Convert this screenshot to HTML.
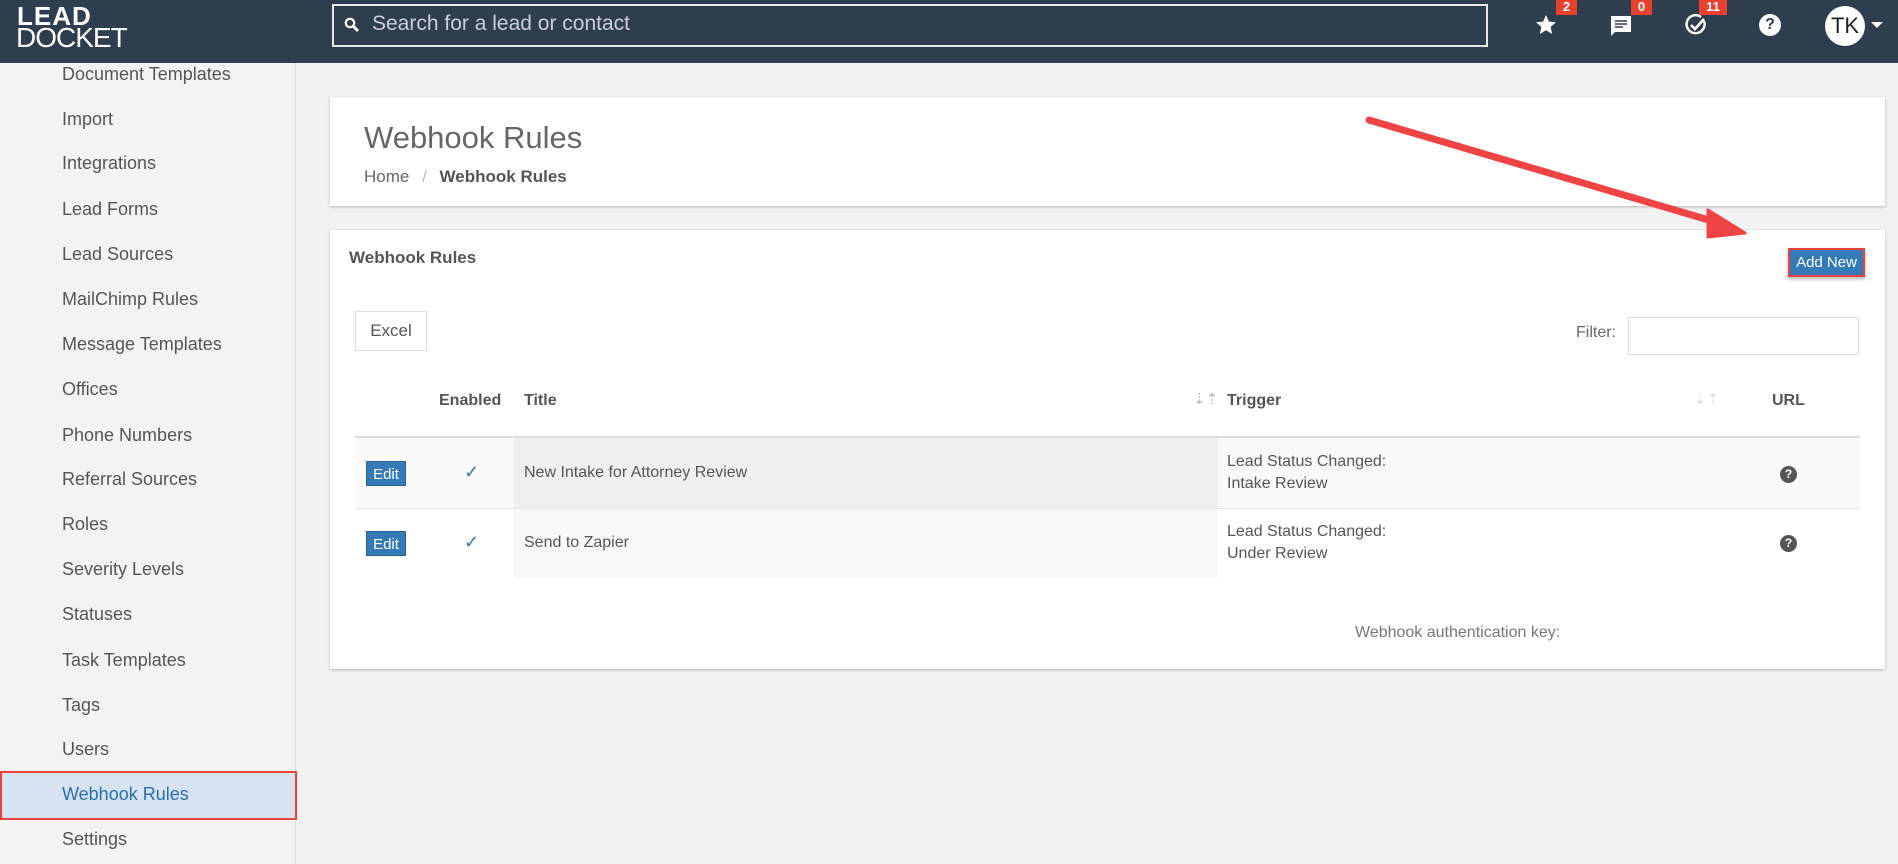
<!DOCTYPE html>
<html><head><meta charset="utf-8"><style>
*{box-sizing:border-box;margin:0;padding:0}
body{width:1898px;height:864px;overflow:hidden;background:#f2f2f2;font-family:"Liberation Sans",sans-serif;color:#555;position:relative}
.nav{position:absolute;left:0;top:0;width:1898px;height:63px;background:#2f3e4f}
.abs{position:absolute}
.side{position:absolute;left:0;top:63px;width:296px;height:801px;background:#f3f3f3;border-right:1px solid #ddd}
.side div{position:absolute;left:62px;font-size:18px;color:#555;line-height:20px}
.card{position:absolute;background:#fff;box-shadow:0 1px 3px rgba(0,0,0,.25)}
.badge{position:absolute;top:0;height:15px;background:#e8412f;color:#fff;font-size:13px;font-weight:bold;line-height:14px;text-align:center}
.edit{position:absolute;left:366px;width:40px;height:25px;background:#337ab7;color:#fff;font-size:15px;line-height:25px;text-align:center;border:1px solid #2a6496}
.chk{position:absolute;left:464px;color:#337ab7;font-size:18px}
.t{position:absolute;font-size:16px;color:#555}
.q{position:absolute;left:1780px;width:17px;height:17px;border-radius:50%;background:#555;color:#fff;font-size:12px;font-weight:bold;text-align:center;line-height:17px}
</style></head><body>
<div class="nav">
  <div class="abs" style="left:17px;top:3px;color:#fff;font-weight:bold;font-size:26px;letter-spacing:1px;line-height:26px">LEAD</div>
  <div class="abs" style="left:16px;top:25px;color:#fff;font-size:28px;line-height:26px;font-weight:300;letter-spacing:-1px">DOCKET</div>
  <div class="abs" style="left:332px;top:4px;width:1156px;height:43px;border:2px solid #e8e8e8;"></div>
  <svg class="abs" style="left:344px;top:17px" width="16" height="16" viewBox="0 0 16 16"><circle cx="6" cy="6" r="4.2" fill="none" stroke="#fff" stroke-width="2.2"/><path d="M9 9l5 5" stroke="#fff" stroke-width="3"/></svg>
  <div class="abs" style="left:372px;top:12px;font-size:21px;color:#ccd;">Search for a lead or contact</div>
  <svg class="abs" style="left:1534px;top:13px" width="24" height="24" viewBox="0 0 24 24"><path d="M12 2l2.9 6.6 7.1.6-5.4 4.7 1.6 7.1L12 17.3 5.8 21l1.6-7.1L2 9.2l7.1-.6z" fill="#fff"/></svg>
  <div class="badge" style="left:1556px;width:21px">2</div>
  <svg class="abs" style="left:1609px;top:14px" width="24" height="24" viewBox="0 0 24 24"><path d="M2 2h20v16H6l-4 4z" fill="#fff"/><path d="M6 7h12M6 10h12M6 13h8" stroke="#2f3e4f" stroke-width="1.6"/></svg>
  <div class="badge" style="left:1631px;width:21px">0</div>
  <svg class="abs" style="left:1684px;top:13px" width="24" height="24" viewBox="0 0 24 24"><path d="M20 8a9 9 0 1 1-3-4" fill="none" stroke="#fff" stroke-width="2.4"/><path d="M7 12l4 4 9-10" fill="none" stroke="#fff" stroke-width="2.6"/></svg>
  <div class="badge" style="left:1699px;width:28px">11</div>
  <div class="abs" style="left:1759px;top:14px;width:22px;height:22px;border-radius:50%;background:#fff;color:#2f3e4f;font-weight:bold;font-size:16px;text-align:center;line-height:22px">?</div>
  <div class="abs" style="left:1825px;top:6px;width:40px;height:40px;border-radius:50%;background:#fff;color:#222;font-size:22px;text-align:center;line-height:40px">TK</div>
  <div class="abs" style="left:1871px;top:22px;width:0;height:0;border-left:6px solid transparent;border-right:6px solid transparent;border-top:6px solid #fff"></div>
</div>
<div class="side">
  <div style="top:1px">Document Templates</div>
  <div style="top:46px">Import</div>
  <div style="top:90px">Integrations</div>
  <div style="top:136px">Lead Forms</div>
  <div style="top:181px">Lead Sources</div>
  <div style="top:226px">MailChimp Rules</div>
  <div style="top:271px">Message Templates</div>
  <div style="top:316px">Offices</div>
  <div style="top:362px">Phone Numbers</div>
  <div style="top:406px">Referral Sources</div>
  <div style="top:451px">Roles</div>
  <div style="top:496px">Severity Levels</div>
  <div style="top:541px">Statuses</div>
  <div style="top:587px">Task Templates</div>
  <div style="top:632px">Tags</div>
  <div style="top:676px">Users</div>
  <div style="position:absolute;left:0;top:708px;width:297px;height:49px;background:#d6e4f1;border:2px solid #e8413f"></div>
  <div style="top:721px;color:#2a6fb0">Webhook Rules</div>
  <div style="top:766px">Settings</div>
</div>
<div class="card" style="left:330px;top:97px;width:1555px;height:109px">
  <div class="abs" style="left:34px;top:23px;font-size:31px;color:#666;font-weight:300">Webhook Rules</div>
  <div class="abs" style="left:34px;top:70px;font-size:17px;color:#666">Home <span style="color:#bbb;margin:0 8px">/</span> <b style="color:#555">Webhook Rules</b></div>
</div>
<div class="card" style="left:330px;top:230px;width:1555px;height:439px">
  <div class="abs" style="left:19px;top:18px;font-size:17px;font-weight:bold;color:#555">Webhook Rules</div>
  <div class="abs" style="left:1458px;top:18px;width:77px;height:29px;background:#337ab7;border:2px solid #e8413f;color:#fff;font-size:15px;line-height:25px;text-align:center;box-shadow:0 2px 4px rgba(0,0,0,.3)">Add New</div>
  <div class="abs" style="left:25px;top:81px;width:72px;height:40px;border:1px solid #ddd;font-size:17px;line-height:38px;text-align:center;color:#555">Excel</div>
  <div class="abs" style="left:1246px;top:94px;font-size:16px;color:#666">Filter:</div>
  <div class="abs" style="left:1298px;top:87px;width:231px;height:38px;border:1px solid #ddd"></div>
</div>
<div class="t" style="left:439px;top:392px;font-weight:bold">Enabled</div>
<div class="t" style="left:524px;top:392px;font-weight:bold">Title</div>
<div class="t" style="left:1193px;top:390px;color:#bbb;font-size:15px">⇣⇡</div>
<div class="t" style="left:1227px;top:392px;font-weight:bold">Trigger</div>
<div class="t" style="left:1694px;top:390px;color:#ddd;font-size:15px">⇣⇡</div>
<div class="t" style="left:1772px;top:392px;font-weight:bold">URL</div>
<div class="abs" style="left:355px;top:436px;width:1505px;height:2px;background:#ddd"></div>
<div class="abs" style="left:355px;top:438px;width:1505px;height:70px;background:#f9f9f9"></div>
<div class="abs" style="left:514px;top:438px;width:704px;height:70px;background:#efefef"></div>
<div class="abs" style="left:355px;top:508px;width:1505px;height:1px;background:#e6e6e6"></div>
<div class="abs" style="left:514px;top:509px;width:704px;height:69px;background:#f8f8f8"></div>
<div class="edit" style="top:461px">Edit</div>
<div class="edit" style="top:531px">Edit</div>
<div class="chk" style="top:462px">✓</div>
<div class="chk" style="top:532px">✓</div>
<div class="t" style="left:524px;top:464px">New Intake for Attorney Review</div>
<div class="t" style="left:524px;top:534px">Send to Zapier</div>
<div class="t" style="left:1227px;top:451px;line-height:22px">Lead Status Changed:<br>Intake Review</div>
<div class="t" style="left:1227px;top:521px;line-height:22px">Lead Status Changed:<br>Under Review</div>
<div class="q" style="top:466px">?</div>
<div class="q" style="top:535px">?</div>
<div class="t" style="left:1355px;top:624px;color:#777">Webhook authentication key:</div>
<svg class="abs" style="left:0;top:0" width="1898" height="864"><path d="M1369 120 L1712 221" stroke="#f04444" stroke-width="7" stroke-linecap="round"/><path d="M1745 233 L1708 210 L1708 237 Z" fill="#f04444" stroke="#f04444" stroke-width="3" stroke-linejoin="round"/></svg>
</body></html>
